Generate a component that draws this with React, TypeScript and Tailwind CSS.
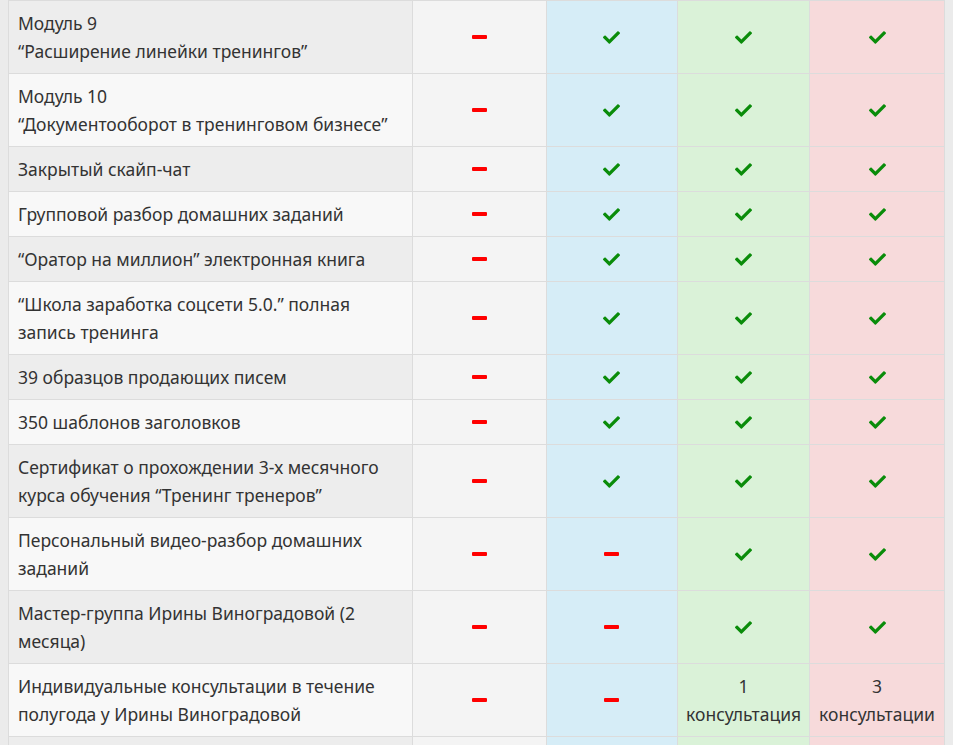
import { FaCheck } from "react-icons/fa";

type Cell = "yes" | "no" | string;

const rows: { title: string[]; cells: Cell[] }[] = [
  { title: ["Модуль 9", "“Расширение линейки тренингов”"], cells: ["no", "yes", "yes", "yes"] },
  { title: ["Модуль 10", "“Документооборот в тренинговом бизнесе”"], cells: ["no", "yes", "yes", "yes"] },
  { title: ["Закрытый скайп-чат"], cells: ["no", "yes", "yes", "yes"] },
  { title: ["Групповой разбор домашних заданий"], cells: ["no", "yes", "yes", "yes"] },
  { title: ["“Оратор на миллион” электронная книга"], cells: ["no", "yes", "yes", "yes"] },
  { title: ["“Школа заработка соцсети 5.0.” полная", "запись тренинга"], cells: ["no", "yes", "yes", "yes"] },
  { title: ["39 образцов продающих писем"], cells: ["no", "yes", "yes", "yes"] },
  { title: ["350 шаблонов заголовков"], cells: ["no", "yes", "yes", "yes"] },
  { title: ["Сертификат о прохождении 3-х месячного", "курса обучения “Тренинг тренеров”"], cells: ["no", "yes", "yes", "yes"] },
  { title: ["Персональный видео-разбор домашних", "заданий"], cells: ["no", "no", "yes", "yes"] },
  { title: ["Мастер-группа Ирины Виноградовой (2", "месяца)"], cells: ["no", "no", "yes", "yes"] },
  { title: ["Индивидуальные консультации в течение", "полугода у Ирины Виноградовой"], cells: ["no", "no", "1|консультация", "3|консультации"] },
  // next row, only its top edge is in view
  { title: [], cells: ["no", "no", "yes", "yes"] },
];

const colBg = ["bg-[#f4f4f4]", "bg-[#d6edf7]", "bg-[#daf2d8]", "bg-[#f7dadb]"];

function Mark({ v }: { v: Cell }) {
  if (v === "yes") return <FaCheck className="mx-auto text-[#0a8c0a]" size={17} />;
  if (v === "no") return <div className="mx-auto h-[4px] w-[15px] rounded-[1px] bg-[#ff0000]" />;
  return (
    <div>
      {v.split("|").map((l) => (
        <div key={l}>{l}</div>
      ))}
    </div>
  );
}

export default function App() {
  return (
    <div
      className="h-screen overflow-hidden bg-[#ebebeb] px-2 text-[#333333]"
      style={{ fontFamily: '"Noto Sans", "Open Sans", sans-serif' }}
    >
      <table className="border-collapse text-[17.5px] leading-[28px]">
        <colgroup>
          <col className="w-[404px]" />
          <col className="w-[134px]" />
          <col className="w-[132px]" />
          <col className="w-[132px]" />
          <col className="w-[135px]" />
        </colgroup>
        <tbody>
          {rows.map((r, i) => (
            <tr key={i} className="h-[45px]">
              <td
                className={`border border-[#dcdcdc] py-2 pl-[9px] pr-2 align-middle ${
                  i % 2 === 0 ? "bg-[#ededed]" : "bg-[#f8f8f8]"
                }`}
              >
                {r.title.map((t) => (
                  <div key={t} className="whitespace-nowrap">
                    {t}
                  </div>
                ))}
              </td>
              {r.cells.map((c, j) => (
                <td key={j} className={`border border-[#dcdcdc] py-2 text-center align-middle ${colBg[j]}`}>
                  <Mark v={c} />
                </td>
              ))}
            </tr>
          ))}
        </tbody>
      </table>
    </div>
  );
}
